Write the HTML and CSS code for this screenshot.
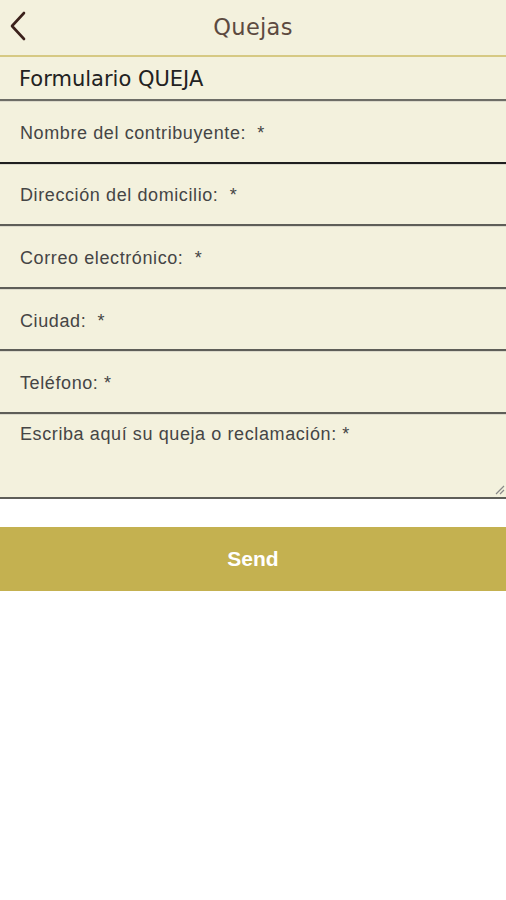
FILE: index.html
```html
<!DOCTYPE html>
<html lang="es">
<head>
<meta charset="utf-8">
<title>Quejas</title>
<link rel="stylesheet" href="styles.css">
</head>
<body>
<header class="topbar">
  <button class="back" aria-label="Atrás">
    <svg width="20" height="30" viewBox="0 0 20 30"><path d="M16 2 L4 15 L16 28" fill="none" stroke="#3b211b" stroke-width="2.6" stroke-linecap="round" stroke-linejoin="round"/></svg>
  </button>
  <h1 class="title">Quejas</h1>
</header>
<div class="form-title">Formulario QUEJA</div>
<form class="form">
  <div class="field"><span class="label">Nombre del contribuyente:&nbsp; *</span></div>
  <div class="field"><span class="label">Dirección del domicilio:&nbsp; *</span></div>
  <div class="field"><span class="label">Correo electrónico:&nbsp; *</span></div>
  <div class="field"><span class="label">Ciudad:&nbsp; *</span></div>
  <div class="field"><span class="label">Teléfono: *</span></div>
  <div class="field area"><span class="label">Escriba aquí su queja o reclamación: *</span>
    <svg class="grip" width="12" height="12" viewBox="0 0 12 12"><path d="M11 3 L3 11 M11 7 L7 11" stroke="#888" stroke-width="1.2"/></svg>
  </div>
  <button type="button" class="send">Send</button>
</form>
</body>
</html>
```
FILE: styles.css
```css
html, body {
  margin: 0;
  padding: 0;
  background: #ffffff;
}
body {
  width: 506px;
  font-family: "Liberation Sans", Arial, sans-serif;
}
.topbar {
  height: 55px;
  background: #f3f1dd;
  border-bottom: 2px solid #d6c983;
  display: flex;
  align-items: center;
  justify-content: center;
  position: relative;
}
.back {
  position: absolute;
  left: 6px;
  top: 11px;
  background: none;
  border: 0;
  padding: 0;
  width: 24px;
  height: 30px;
  display: flex;
  align-items: center;
  justify-content: center;
}
.title {
  margin: 0;
  font-family: "DejaVu Sans", Verdana, sans-serif;
  font-weight: normal;
  font-size: 22.5px;
  color: #5c4a40;
  letter-spacing: 0.3px;
  padding-bottom: 2px;
}
.form-title {
  height: 41px;
  padding-top: 1px;
  background: #f3f1dd;
  border-bottom: 2px solid #6d6d66;
  box-shadow: 0 1px 0 #c7c6bb;
  display: flex;
  align-items: center;
  padding-left: 19px;
  font-family: "DejaVu Sans", Verdana, sans-serif;
  font-size: 21px;
  color: #222;
}
.form {
  margin: 0;
  display: flex;
  flex-direction: column;
}
.field {
  height: 59.6px;
  background: #f3f1dd;
  border-top: 1px solid #dcdacb;
  border-bottom: 2px solid #5e5e58;
  display: flex;
  align-items: center;
  padding-left: 20px;
  position: relative;
}
.field:first-child {
  border-bottom-color: #1f1f1f;
}
.label {
  font-size: 18px;
  letter-spacing: 0.6px;
  color: #454545;
  padding-top: 3px;
}
.area {
  height: 82px;
  align-items: flex-start;
}
.area .label {
  padding-top: 9px;
}
.grip {
  position: absolute;
  right: 1px;
  bottom: 2px;
}
.send {
  margin-top: 28px;
  height: 64px;
  background: #c4b150;
  border: 0;
  color: #ffffff;
  font-family: "Liberation Sans", Arial, sans-serif;
  font-weight: bold;
  font-size: 21px;
  width: 100%;
}
```
